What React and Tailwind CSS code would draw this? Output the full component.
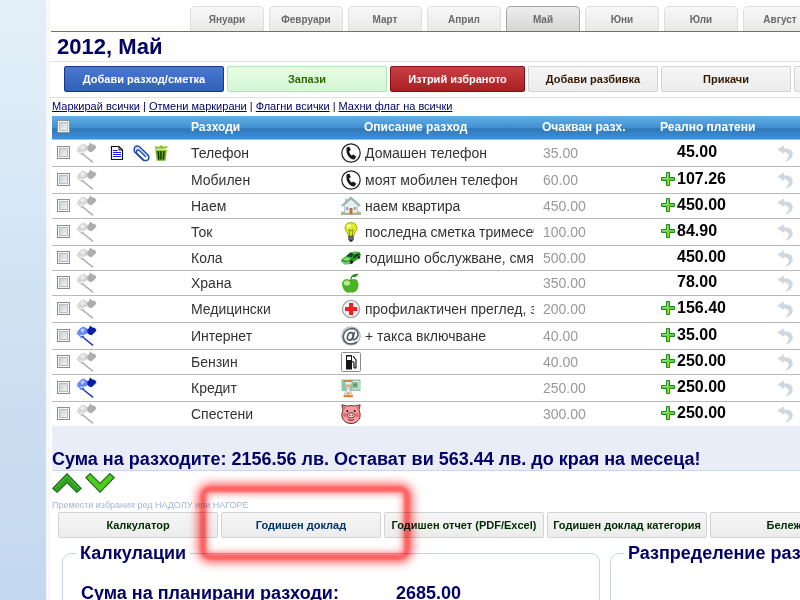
import React from "react";

const MONTHS = ["Януари", "Февруари", "Март", "Април", "Май", "Юни", "Юли", "Август", "Септември"];

const ROWS = [
  { name: "Телефон", icon: "phone", desc: "Домашен телефон", plan: "35.00", real: "45.00", tools: true, h: "h-[27px]" },
  { name: "Мобилен", icon: "phone", desc: "моят мобилен телефон", plan: "60.00", real: "107.26", plus: true, h: "h-[27px]" },
  { name: "Наем", icon: "house", desc: "наем квартира", plan: "450.00", real: "450.00", plus: true, h: "h-[25px]" },
  { name: "Ток", icon: "bulb", desc: "последна сметка тримесечие", plan: "100.00", real: "84.90", plus: true, h: "h-[27px]" },
  { name: "Кола", icon: "car", desc: "годишно обслужване, смяна", plan: "500.00", real: "450.00", h: "h-[25px]" },
  { name: "Храна", icon: "apple", desc: "", plan: "350.00", real: "78.00", h: "h-[25px]" },
  { name: "Медицински", icon: "medical", desc: "профилактичен преглед, зъби", plan: "200.00", real: "156.40", plus: true, h: "h-[27px]" },
  { name: "Интернет", icon: "at", desc: "+ такса включване", plan: "40.00", real: "35.00", plus: true, flagged: true, h: "h-[27px]" },
  { name: "Бензин", icon: "fuel", desc: "", plan: "40.00", real: "250.00", plus: true, h: "h-[25px]" },
  { name: "Кредит", icon: "credit", desc: "", plan: "250.00", real: "250.00", plus: true, flagged: true, h: "h-[27px]" },
  { name: "Спестени", icon: "pig", desc: "", plan: "300.00", real: "250.00", plus: true, h: "h-[25px]" },
];

function Flag({ on }) {
  const dark = on ? "#0a1fa8" : "#adadad";
  const pale = on ? "#6485f5" : "#d6d6d6";
  const pole = on ? "#1c3bb5" : "#adadad";
  return (
    <svg width="21" height="21" viewBox="0 0 21 21" className="block">
      <path d="M1 7 4.5 3 7.500 1.500 11 3.500 12 8 9 9.500 6 10 3.500 9.500Z" fill={pale} />
      <path d="M4 5 7 3 9 5 6.500 8Z" fill={on ? "#b9c9ff" : "#ededed"} />
      <path d="M11 4.500 13 3.200 14 .5 16.500 2.500 19 3 20.500 5.500 17.500 8.500 15.500 10.300 13 9.500 11.500 8Z" fill={dark} />
      <path d="M.8 8.200 3 9.500 5 12 8 11" stroke={pale} strokeWidth="1.500" fill="none" />
      <path d="M6 11.500 17 20.300" stroke={pole} strokeWidth="1.500" fill="none" />
    </svg>
  );
}

function DocIcon() {
  return (
    <svg width="14" height="16" viewBox="0 0 14 16">
      <path d="M1.500 1.500H9L12.500 5V14.500H1.500Z" fill="#fff" stroke="#111" strokeWidth="1.200" />
      <path d="M9 1.500V5H12.500" fill="none" stroke="#111" />
      <path d="M3 5.500H7.500M3 7.500H11M3 9.500H11M3 11.500H11" stroke="#1a1aff" />
    </svg>
  );
}

function ClipIcon() {
  return (
    <svg width="17" height="17" viewBox="0 0 17 17" fill="none" strokeLinecap="round">
      <path d="M1.500 5.500Q.5 2 3.500 1 5.500 .6 7 2.200L15 10Q16.500 12 15.300 14.500 13 16.500 10.500 14.800L3.500 8Q2.800 5.800 4.500 5 5.800 4.800 7 6L12.500 11.500" stroke="#1d4bb0" strokeWidth="1.500" />
      <path d="M3 3Q4.500 2 6.500 4L14 11.500" stroke="#9cc2f2" strokeWidth="1" />
      <path d="M1 6.500 10.500 15.500" stroke="#1d4bb0" strokeWidth="1.200" />
    </svg>
  );
}

function TrashIcon() {
  return (
    <svg width="14" height="16" viewBox="0 0 14 16">
      <path d="M.5 1.500 5.500 1.800 5.800 .6 8.500 .5 9 1.800 13 .9 13.500 2.500 10 3.800H1Z" fill="#8bc12c" />
      <path d="M1.200 5H12.800L11.500 15.800H2.800Z" fill="#74b41c" />
      <path d="M4.300 6 4.800 14.500M7 6V14.500M9.900 6 9.400 14.500" stroke="#143000" strokeWidth="1.500" />
      <path d="M1 5H13" stroke="#a5d640" />
    </svg>
  );
}

function CategoryIcon({ kind }) {
  const box = { width: 20, height: 20, viewBox: "0 0 20 20", className: "block shrink-0" };
  switch (kind) {
    case "phone":
      return (
        <svg {...box}>
          <circle cx="10" cy="10" r="9.200" fill="#fff" stroke="#222" strokeWidth="1.200" />
          <path d="M5.600 4.500 8.200 3.500 9.800 7 8 8.600Q8.600 11 10.600 12.400L12.400 11.400 15.300 13.800 13.600 16.200Q11.500 17.200 8.400 14.500 4.500 10.500 5.600 4.500Z" fill="#1a1a1a" />
        </svg>
      );
    case "house":
      return (
        <svg {...box}>
          <path d="M0 16Q10 13 20 16V19H0Z" fill="#9cbf8c" />
          <path d="M3.500 9 10 3 16.500 9V18H3.500Z" fill="#e9efee" stroke="#9fb3b0" strokeWidth=".7" />
          <path d="M4 2.500H6.500V7H4Z" fill="#b7cbc8" />
          <path d="M.8 10 10 1.800 19.200 10" fill="none" stroke="#94b5ae" strokeWidth="2" />
          <path d="M8.500 12H11.500V18H8.500Z" fill="#b9703c" />
          <path d="M5 11H7.200V14H5ZM12.800 11H15V14H12.800Z" fill="#86a9c4" />
          <path d="M4 17.500H8M12 17.500H19" stroke="#d5a487" strokeWidth="1.400" />
        </svg>
      );
    case "bulb":
      return (
        <svg {...box}>
          <path d="M10 .5Q16 .8 16 6 16 8.500 13.800 10.800L12.500 14H7.500L6.200 10.800Q4 8.500 4 6 4 .8 10 .5Z" fill="#dcec25" stroke="#8c9a10" strokeWidth=".8" />
          <path d="M8.700 14 8 7.500 10 9 12 7.500 11.300 14" fill="none" stroke="#7c7a10" strokeWidth=".8" />
          <ellipse cx="8" cy="4" rx="2.300" ry="1.800" fill="#fbffb0" />
          <path d="M7.300 14H12.700V17.500L11 19.700H9L7.300 17.500Z" fill="#333" />
          <path d="M7.600 15.300H12.400M7.600 17H12.400" stroke="#c9c9c9" strokeWidth=".6" />
        </svg>
      );
    case "car":
      return (
        <svg {...box}>
          <path d="M.3 11.500 5 8 9 4.500 14 3.500 18.500 4 19.800 6.500 19 9.500 10 16 4 16.500 .5 14.500Z" fill="#2b9a26" />
          <path d="M5.500 8 9.500 5 13 5.500 10.500 9.300Z" fill="#1d3f2d" />
          <path d="M10 4.500 17.500 4.300 13.500 6Z" fill="#7bd765" />
          <path d="M1.200 11.800 5 9 10 10 7 13.300Z" fill="#7fdb68" />
          <path d="M12 9.500 14 6.500 18.500 5.500 18.500 7 12.500 10.500Z" fill="#12401a" />
          <path d="M1 14.300 5 15.300 9 14.500" fill="none" stroke="#cfd8cf" strokeWidth="1.100" />
          <circle cx="10.500" cy="14" r="1.700" fill="#222" />
          <circle cx="18" cy="9.500" r="1.300" fill="#222" />
        </svg>
      );
    case "apple":
      return (
        <svg {...box}>
          <path d="M9.500 7.500Q7 5 3.500 6.500 .5 8.500 1.200 12.500 2.500 18 6 19.500 8 20 9.500 19.300 12 20.300 14.500 18.500 17.500 16 17.500 11.500 17.300 7.500 14.500 6.200 12 5.500 9.500 7.500Z" fill="#49b325" />
          <ellipse cx="6" cy="10" rx="3.200" ry="2.600" fill="#b7ec8c" />
          <path d="M10 8Q9.500 4 12 2.500" fill="none" stroke="#4b7a1d" strokeWidth="1.300" />
          <path d="M11 4Q11.500 .3 17.500 .8 15.500 5.200 11 4Z" fill="#2f8f1f" />
        </svg>
      );
    case "medical":
      return (
        <svg {...box}>
          <circle cx="10" cy="10" r="8.600" fill="#f1f3f3" stroke="#a2a7a9" strokeWidth="1.300" />
          <path d="M8 4H12V8H16V12H12V16H8V12H4V8H8Z" fill="#f22020" />
        </svg>
      );
    case "at":
      return (
        <svg {...box} fill="none" stroke="#535c64">
          <circle cx="10" cy="10" r="9.200" stroke="#b3babf" strokeWidth="1.300" />
          <ellipse cx="9.300" cy="10.300" rx="2.600" ry="3.900" transform="rotate(18 9 10)" strokeWidth="1.700" />
          <path d="M13.500 5.800 11.800 12.500Q11.700 14.300 13.700 13.500 17.500 11.500 17 7.500 16 2.500 10.500 2.500 3 3.500 2.300 10.500 2.500 17.500 9.500 18 13 18 16 16" strokeWidth="1.600" />
        </svg>
      );
    case "fuel":
      return (
        <svg {...box}>
          <rect x=".5" y=".5" width="19" height="19" rx="1" fill="#fff" stroke="#8b8b8b" />
          <path d="M5 3.500Q5 3 5.500 3H10.500Q11 3 11 3.500V17.500H5Z" fill="#151515" />
          <path d="M6 4.500H10V8H6Z" fill="#fff" />
          <path d="M11 9.500Q13 9.500 13 12V15.500Q14.500 17 15 15V8L12 4" fill="none" stroke="#151515" strokeWidth="1.200" />
        </svg>
      );
    case "credit":
      return (
        <svg {...box}>
          <rect x=".5" y="1.500" width="19" height="11.500" fill="#93c4a3" />
          <path d="M11 3.500H18V11H11" fill="none" stroke="#d8efdc" />
          <circle cx="14" cy="7" r="2" fill="#5c9b74" />
          <path d="M4 3.500H11V5.500L8.500 10.500 11 16V17.500H3.500V16L6 10.500 4 5.500Z" fill="#e4eefa" stroke="#86a5c9" strokeWidth=".6" />
          <path d="M5 6.500H10L7.500 10ZM4.500 16.500 7.300 13.500 10 16.500Z" fill="#f0a04a" />
          <path d="M2.500 3H11.500M2.500 18.300H12" stroke="#d9772a" strokeWidth="1.500" />
        </svg>
      );
    default:
      return (
        <svg {...box}>
          <path d="M.8 .8 6.500 2Q10 1 13.500 2L19.200 .8 18 6Q20 10 18.800 14 16 19.500 10 19.500 4 19.500 1.200 14 0 10 2 6Z" fill="#f79da0" stroke="#47292b" strokeWidth=".9" />
          <path d="M2 2 5 3.300 3 6ZM18 2 15 3.300 17 6Z" fill="#d9666b" />
          <circle cx="6.300" cy="7" r="1.100" fill="#222" />
          <circle cx="13.700" cy="7" r="1.100" fill="#222" />
          <circle cx="4" cy="11" r="2" fill="#fa6268" />
          <circle cx="16" cy="11" r="2" fill="#fa6268" />
          <ellipse cx="10" cy="11.300" rx="3.800" ry="2.600" fill="#fbc9c9" stroke="#47292b" strokeWidth=".8" />
          <path d="M8.700 10.500V12M11.300 10.500V12M7 15.500Q10 17 13 15.500" fill="none" stroke="#47292b" strokeWidth=".9" />
        </svg>
      );
  }
}

function Plus() {
  return (
    <svg width="14" height="14" viewBox="0 0 14 14" className="block">
      <path d="M5.500 .5H8.500V5.500H13.500V8.500H8.500V13.500H5.500V8.500H.5V5.500H5.500Z" fill="#68cf45" stroke="#1d8a1d" />
      <path d="M6.500 1.500V6.500H1.500" fill="none" stroke="#a6dd94" />
      <path d="M7.500 8V12.500" stroke="#a8f000" />
    </svg>
  );
}

function Undo() {
  return (
    <svg width="17" height="17" viewBox="0 0 17 17" className="block">
      <path d="M.3 4.500 7 .3 6.800 3.300Q15.500 3 15.800 9.500 15.500 15 7.500 16.800 12.500 13 11.500 9.500 10 7 6.800 7L7 9Z" fill="#cfd8df" />
    </svg>
  );
}

function Arrow({ down }) {
  return (
    <svg width="30" height="20" viewBox="0 0 30 20" className={down ? "block rotate-180" : "block"}>
      <path d="M.8 15.500 15 .8 29.200 15.500 24.800 19.300 15 9.500 5.200 19.300Z" fill={down ? "#4ccc18" : "#2fa31c"} stroke="#1c6e1c" strokeWidth="1.200" />
      <path d="M3 15 15 2.800 27 15" fill="none" stroke="#5cc63c" />
    </svg>
  );
}

function Check({ label }) {
  return (
    <input
      type="checkbox"
      aria-label={label}
      className="block size-[13px] appearance-none border border-[#8a8e93] bg-linear-to-br from-[#c3c8ce] to-[#fafafa] shadow-[inset_0_0_0_1px_#f4f4f4,inset_0_0_0_2px_#b9bec4] checked:bg-[#4a6fb5]"
    />
  );
}

const BTN = "h-[26px] shrink-0 overflow-hidden rounded-[2px] border text-[11px] font-bold whitespace-nowrap ";
const GREY = "border-[#d3d3d3] bg-linear-to-b from-[#f6f6f6] to-[#ececec] ";

function Panel({ title, className, children }) {
  return (
    <fieldset className={"h-40 shrink-0 rounded-[9px] border border-[#c5d5ea] pl-[18px] " + className}>
      <legend className="-ml-[5px] px-1 text-lg leading-5 font-bold whitespace-nowrap">{title}</legend>
      {children}
    </fieldset>
  );
}

export default function App() {
  return (
    <div className="flex h-screen overflow-hidden bg-white font-['Liberation_Sans',Arial,sans-serif] text-[#000066]">
      <aside className="w-[46px] shrink-0 bg-linear-to-b from-[#e4f0f9] via-[#d0e3f3] to-[#c3d7ef]" />
      <div className="w-1 shrink-0 bg-[#f8f8f8]" />
      <main className="min-w-0 flex-1 overflow-hidden">
        <nav className="ml-px flex h-8 items-end gap-[5px] border-b border-[#808000] pl-[139px]">
          {MONTHS.map((m) => (
            <button
              key={m}
              type="button"
              className={
                "h-[25px] w-[74px] shrink-0 rounded-t-[5px] border border-b-0 text-[10px] font-bold text-[#6a6a6a] " +
                (m === "Май"
                  ? "border-[#a5a5a5] bg-linear-to-b from-[#ededed] to-[#d6d6d6]"
                  : "border-[#dedede] bg-linear-to-b from-[#f8f8f8] to-[#e8e8e8]")
              }
            >
              {m}
            </button>
          ))}
        </nav>

        <h1 className="h-[30px] border-b border-[#e2e2e2] pl-[7px] text-[22px] leading-[29px] font-bold">2012, Май</h1>

        <div className="flex h-9 gap-[3px] border-b border-[#e2e2e2] pt-1 pl-3.5">
          <button type="button" className={BTN + "w-40 border-[#16388c] bg-linear-to-b from-[#4a78d0] to-[#2f61b8] text-white"}>
            Добави разход/сметка
          </button>
          <button type="button" className={BTN + "w-40 border-[#b3e6b3] bg-linear-to-b from-[#e6ffe2] to-[#d4f5d6] text-[#336600]"}>Запази</button>
          <button type="button" className={BTN + "w-[135px] border-[#8a1015] bg-linear-to-b from-[#c84044] to-[#a81e22] text-white"}>
            Изтрий избраното
          </button>
          <button type="button" className={BTN + GREY + "w-[130px] text-[#331a00]"}>Добави разбивка</button>
          <button type="button" className={BTN + GREY + "w-[130px] text-[#331a00]"}>Прикачи</button>
          <button type="button" className={BTN + GREY + "w-[130px] text-[#331a00]"} aria-label="Още" />
        </div>

        <div className="h-[18px] pl-0.5 text-[11px] leading-[17px] whitespace-nowrap">
          <a href="#all" className="underline">Маркирай всички</a>
          {" | "}
          <a href="#none" className="underline">Отмени маркирани</a>
          {" | "}
          <a href="#flag" className="underline">Флагни всички</a>
          {" | "}
          <a href="#unflag" className="underline">Махни флаг на всички</a>
        </div>

        <div className="pl-0.5">
          <table className="w-full table-fixed border-separate border-spacing-0 text-left">
            <colgroup>
              <col className="w-6" />
              <col className="w-[30px]" />
              <col className="w-[85px]" />
              <col className="w-[150px]" />
              <col className="w-[201px]" />
              <col className="w-[118px]" />
              <col className="w-[110px]" />
              <col />
            </colgroup>
            <thead>
              <tr className="h-[23px] bg-[linear-gradient(#66b0e6,#418fcf_50%,#2e78b6_56%,#418fdb)] text-xs text-white *:p-0 *:pb-0.5">
                <th><div className="pl-[5px]"><Check label="Маркирай всички" /></div></th>
                <th />
                <th />
                <th>Разходи</th>
                <th><div className="pl-[23px]">Описание разход</div></th>
                <th>Очакван разх.</th>
                <th>Реално платени</th>
                <th />
              </tr>
            </thead>
            <tbody>
              {ROWS.map((r) => (
                <tr key={r.name} className={r.h + " text-sm leading-5 text-[#333] *:border-t *:border-[#b9b9b9] *:p-0"}>
                  <td><div className="pb-0.5 pl-[5px]"><Check label={r.name} /></div></td>
                  <td><div className="pb-0.5"><Flag on={r.flagged} /></div></td>
                  <td>
                    {r.tools && (
                      <div className="flex items-center gap-1 pl-1">
                        <DocIcon />
                        <div className="w-px" />
                        <ClipIcon />
                        <TrashIcon />
                      </div>
                    )}
                  </td>
                  <td>{r.name}</td>
                  <td>
                    <div className="mr-2 flex items-center gap-1 overflow-hidden whitespace-nowrap">
                      <CategoryIcon kind={r.icon} />
                      <span>{r.desc}</span>
                    </div>
                  </td>
                  <td className="text-[#999]"><div className="pl-px">{r.plan}</div></td>
                  <td>
                    <div className="flex items-center gap-0.5 pb-0.5 pl-px text-base leading-5 font-bold text-black">
                      <div className="w-3.5">{r.plus && <Plus />}</div>
                      {r.real}
                    </div>
                  </td>
                  <td><div className="pl-[7px]"><Undo /></div></td>
                </tr>
              ))}
            </tbody>
          </table>

          <p className="h-[45px] border-b border-[#c5d8ef] bg-[#e8edf7] pt-[22px] text-lg leading-[22px] font-bold whitespace-nowrap">
            Сума на разходите: 2156.56 лв. Остават ви 563.44 лв. до края на месеца!
          </p>
          <div className="flex gap-[3px] pt-0.5">
            <button type="button" aria-label="Нагоре"><Arrow /></button>
            <button type="button" aria-label="Надолу"><Arrow down /></button>
          </div>
          <p className="h-[19px] pt-1 text-[9px] leading-4 whitespace-nowrap text-[#a3b4dd]">Премести избрания ред НАДОЛУ или НАГОРЕ</p>

          <div className="flex gap-[3px] pl-1.5 text-[#002b00]">
            <button type="button" className={BTN + GREY + "w-40"}>Калкулатор</button>
            <div className="relative shrink-0">
              <button type="button" className={BTN + GREY + "block w-40 text-[#003366]"}>Годишен доклад</button>
              <div className="pointer-events-none absolute -top-[26px] -right-[29px] -bottom-[22px] -left-[21px] z-10 rounded-[10px] border-6 border-[#ff3c3c]/80 mix-blend-multiply shadow-[0_0_9px_3px_rgba(255,50,50,0.7),inset_0_0_7px_1px_rgba(255,50,50,0.7)] blur-[1px]" />
            </div>
            <button type="button" className={BTN + GREY + "w-40"}>Годишен отчет (PDF/Excel)</button>
            <button type="button" className={BTN + GREY + "w-40"}>Годишен доклад категория</button>
            <button type="button" className={BTN + GREY + "w-40"}>Бележки</button>
          </div>

          <div className="flex gap-2.5 pt-[5px] pl-2.5">
            <Panel title="Калкулации" className="w-[538px]">
              <dl className="flex pt-5 text-lg leading-5 font-bold whitespace-nowrap">
                <dt className="w-[315px]">Сума на планирани разходи:</dt>
                <dd>2685.00</dd>
              </dl>
            </Panel>
            <Panel title="Разпределение разходи" className="w-[538px]" />
          </div>
        </div>
      </main>
    </div>
  );
}
